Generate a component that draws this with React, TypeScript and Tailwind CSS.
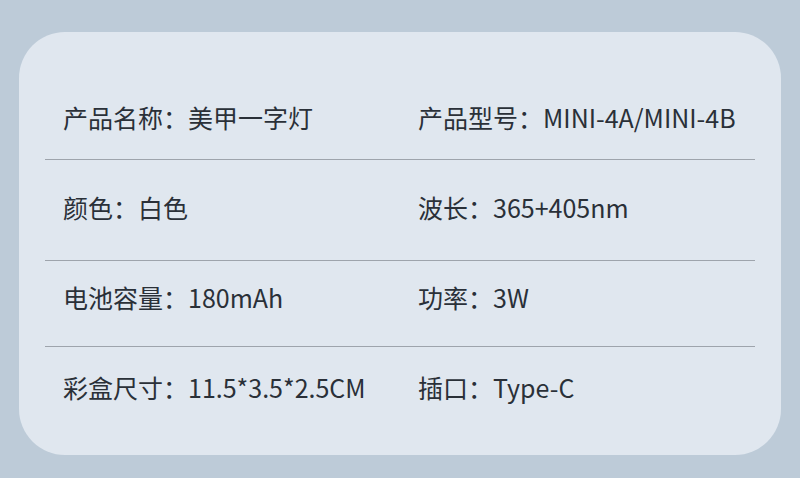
const rows = [
  { a: "产品名称：美甲一字灯", b: "产品型号：MINI-4A/MINI-4B", pad: "pt-[70px] pb-[27px]" },
  { a: "颜色：白色", b: "波长：365+405nm", pad: "pt-[32px] pb-[38px]" },
  { a: "电池容量：180mAh", b: "功率：3W", pad: "pt-[21px] pb-[34px]" },
  { a: "彩盒尺寸：11.5*3.5*2.5CM", b: "插口：Type-C", pad: "pt-[25px] pb-[53px]" },
]

export default function App() {
  return (
    <div className="w-[800px] h-[478px] bg-[#bdcbd8] pt-[32px] px-[19px]">
      <div
        className="w-[762px] h-[423px] bg-[#e0e7ef] rounded-[46px] px-[26px] text-[#2a3038] text-[25px] leading-[30px]"
        style={{ fontFamily: '"Noto Sans CJK SC", "Noto Sans", sans-serif' }}
      >
        {rows.map((r, i) => (
          <div
            key={r.a}
            className={`grid grid-cols-[355px_1fr] pl-[18px] ${r.pad} ${i < rows.length - 1 ? "border-b border-[#9ea4ac]" : ""}`}
          >
            <span>{r.a}</span>
            <span>{r.b}</span>
          </div>
        ))}
      </div>
    </div>
  )
}
